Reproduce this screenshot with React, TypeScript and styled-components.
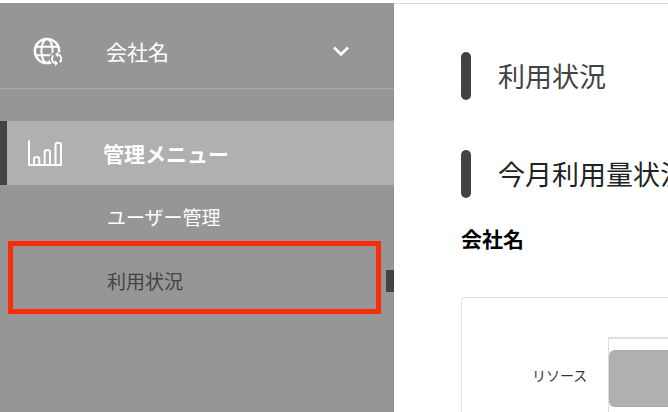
import React from "react";
import styled, { createGlobalStyle } from "styled-components";

const GlobalStyle = createGlobalStyle`
  *, *::before, *::after { box-sizing: border-box; }
  body {
    margin: 0;
    background: #fff;
    color: #000;
    font-family: "Noto Sans CJK JP", "Noto Sans", sans-serif;
  }
  h1, h2, h3, ul { margin: 0; padding: 0; }
`;

const Page = styled.div`
  display: flex;
  min-height: 100vh;
  padding-top: 3px;
`;

const Sidebar = styled.aside`
  display: flex;
  flex-direction: column;
  flex: 0 0 394px;
  background: #969696;
`;

const CompanyButton = styled.button`
  display: flex;
  align-items: center;
  height: 86px;
  margin-bottom: 32px;
  padding: 10px 44px 0 28px;
  border: 0;
  border-bottom: 1px solid #a9a9a9;
  background: none;
  color: #fff;
  font: inherit;
  font-size: 21px;
  line-height: 32px;
  text-align: left;
  cursor: pointer;
`;

const CompanyName = styled.span`
  flex: 1;
`;

const IconSlot = styled.span<{ $width: number }>`
  display: flex;
  flex: 0 0 ${(p) => p.$width}px;
`;

const MenuLink = styled.a`
  display: flex;
  align-items: center;
  height: 64px;
  padding-left: 20px;
  border-left: 7px solid #434343;
  background: #b0b0b0;
  color: #fff;
  font-size: 21px;
  font-weight: 700;
  line-height: 32px;
  text-decoration: none;
`;

const SubMenu = styled.ul`
  list-style: none;
`;

const SubItem = styled.li`
  position: relative;
`;

const SubLink = styled.a<{ $current?: boolean }>`
  display: flex;
  align-items: center;
  justify-content: space-between;
  height: 64px;
  padding-left: 107px;
  color: ${(p) => (p.$current ? "#434343" : "#fff")};
  font-size: 19px;
  line-height: 28px;
  text-decoration: none;
`;

const CurrentMarker = styled.span`
  width: 8px;
  height: 22px;
  background: #434343;
`;

const Highlight = styled.span`
  position: absolute;
  inset: -8px 13px -1px 8px;
  border: 5px solid #f92d0b;
  pointer-events: none;
`;

const Main = styled.main`
  display: flex;
  flex: 1;
  flex-direction: column;
  min-width: 0;
  overflow: hidden;
  padding: 48px 0 0 67px;
  border-top: 1px solid #dedede;
`;

const Heading = styled.h1<{ $color: string }>`
  display: flex;
  align-items: center;
  gap: 27px;
  height: 48px;
  margin-bottom: 50px;
  color: ${(p) => p.$color};
  font-size: 27px;
  font-weight: 400;
  line-height: 40px;
  white-space: nowrap;

  &::before {
    content: "";
    flex: 0 0 10px;
    height: 48px;
    border-radius: 5px;
    background: #434343;
  }
`;

const SectionHeading = styled(Heading)`
  margin-bottom: 24px;
`;

const CompanyHeading = styled.h3`
  margin-bottom: 43px;
  font-size: 21px;
  font-weight: 700;
  line-height: 32px;
`;

const Card = styled.section`
  display: flex;
  flex: 1;
  padding: 39px 0 0 70px;
  border: 1px solid #e0e0e0;
  border-width: 1px 0 0 1px;
  border-top-left-radius: 4px;
`;

const AxisLabel = styled.span`
  flex: 0 0 76px;
  padding-top: 28px;
  color: #333;
  font-size: 14px;
  line-height: 20px;
`;

const Plot = styled.div`
  flex: 1;
  padding-top: 11px;
  border: 1px solid #dedede;
  border-width: 2px 0 0 1px;
`;

const Bar = styled.div`
  height: 57px;
  border: 1px solid #a8a8a8;
  border-right: 0;
  border-radius: 6px 0 0 6px;
  background: #b0b0b0;
`;

const GlobeSyncIcon = () => (
  <svg width="36" height="32" viewBox="0 0 36 32" fill="none" stroke="#fff" aria-hidden="true">
    <circle cx="19" cy="16" r="12.1" strokeWidth="2.5" />
    <ellipse cx="19" cy="16" rx="5.6" ry="12" strokeWidth="2" />
    <path d="M8 11.8H30M8 20.2H30" strokeWidth="2" />
    <circle cx="28.6" cy="23.8" r="7" fill="#969696" stroke="none" />
    <path d="M27 28.2A4.7 4.7 0 0 1 25.4 20.4M30.2 19.4A4.7 4.7 0 0 1 31.8 27.2" strokeWidth="1.9" />
    <path d="M27 25.2V31.2L30 28.2zM30.2 16.4V22.4L27.2 19.4z" fill="#fff" stroke="none" />
  </svg>
);

const ChevronIcon = () => (
  <svg width="18" height="14" viewBox="0 0 18 14" fill="none" aria-hidden="true">
    <path d="M2 3.5l7 7 7-7" stroke="#fff" strokeWidth="2.6" />
  </svg>
);

const BarChartIcon = () => (
  <svg width="36" height="28" viewBox="0 0 36 28" fill="none" stroke="#fff" strokeWidth="2" strokeLinejoin="round" aria-hidden="true">
    <path d="M2 1.5V26H34V5.5Q34 4 32.5 4H30Q28.5 4 28.5 5.5V26" />
    <path d="M7 26V19.8Q7 18.3 8.5 18.3H10.8Q12.3 18.3 12.3 19.8V26" />
    <path d="M17.7 26V12.7Q17.7 11.2 19.2 11.2H21.5Q23 11.2 23 12.7V26" />
  </svg>
);

export default function App() {
  return (
    <>
      <GlobalStyle />
      <Page>
        <Sidebar>
          <CompanyButton type="button" aria-expanded={false}>
            <IconSlot $width={78}>
              <GlobeSyncIcon />
            </IconSlot>
            <CompanyName>会社名</CompanyName>
            <ChevronIcon />
          </CompanyButton>
          <nav>
            <MenuLink href="#admin">
              <IconSlot $width={76}>
                <BarChartIcon />
              </IconSlot>
              管理メニュー
            </MenuLink>
            <SubMenu>
              <SubItem>
                <SubLink href="#users">ユーザー管理</SubLink>
              </SubItem>
              <SubItem>
                <SubLink href="#usage" aria-current="page" $current>
                  利用状況
                  <CurrentMarker />
                </SubLink>
                <Highlight />
              </SubItem>
            </SubMenu>
          </nav>
        </Sidebar>
        <Main>
          <Heading $color="#434343">利用状況</Heading>
          <SectionHeading as="h2" $color="#222">
            今月利用量状況
          </SectionHeading>
          <CompanyHeading>会社名</CompanyHeading>
          <Card>
            <AxisLabel>リソース</AxisLabel>
            <Plot>
              <Bar />
            </Plot>
          </Card>
        </Main>
      </Page>
    </>
  );
}
